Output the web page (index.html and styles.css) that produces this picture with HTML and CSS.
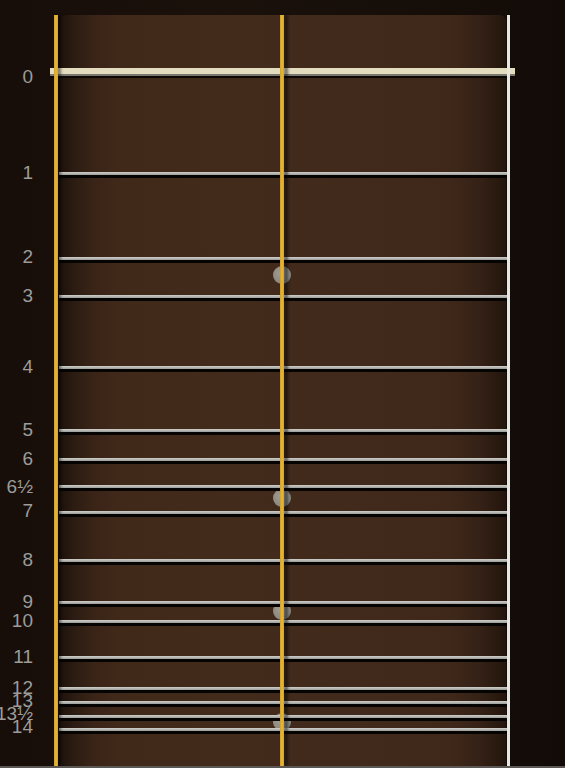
FILE: index.html
```html
<!DOCTYPE html>
<html lang="en">
<head>
  <meta charset="UTF-8">
  <meta name="viewport" content="width=device-width, initial-scale=1.0">
  <title>Fretboard</title>
  <link rel="stylesheet" href="styles.css">
</head>
<body>
  <div class="neck">
    <div class="board"></div>

    <!-- position markers sit under the frets -->
    <div class="dot" style="--y: 275px"></div>
    <div class="dot" style="--y: 498px"></div>
    <div class="dot" style="--y: 611px"></div>
    <div class="dot" style="--y: 722px"></div>

    <div class="nut"></div>
    <span class="label" style="--y: 77px">0</span>

    <div class="fret" style="--y: 173px"></div><span class="label" style="--y: 173px">1</span>
    <div class="fret" style="--y: 258px"></div><span class="label" style="--y: 257px">2</span>
    <div class="fret" style="--y: 296px"></div><span class="label" style="--y: 296px">3</span>
    <div class="fret" style="--y: 367px"></div><span class="label" style="--y: 367px">4</span>
    <div class="fret" style="--y: 430px"></div><span class="label" style="--y: 430px">5</span>
    <div class="fret" style="--y: 459px"></div><span class="label" style="--y: 459px">6</span>
    <div class="fret" style="--y: 486px"></div><span class="label" style="--y: 487px">6½</span>
    <div class="fret" style="--y: 512px"></div><span class="label" style="--y: 511px">7</span>
    <div class="fret" style="--y: 560px"></div><span class="label" style="--y: 560px">8</span>
    <div class="fret" style="--y: 602px"></div><span class="label" style="--y: 602px">9</span>
    <div class="fret" style="--y: 621px"></div><span class="label" style="--y: 621px">10</span>
    <div class="fret" style="--y: 657px"></div><span class="label" style="--y: 657px">11</span>
    <div class="fret" style="--y: 688px"></div><span class="label" style="--y: 688px">12</span>
    <div class="fret" style="--y: 702px"></div><span class="label" style="--y: 701px">13</span>
    <div class="fret" style="--y: 716px"></div><span class="label" style="--y: 714px">13½</span>
    <div class="fret" style="--y: 729px"></div><span class="label" style="--y: 727px">14</span>

    <div class="string gold left"></div>
    <div class="string gold middle"></div>
    <div class="string white"></div>

    <div class="edge"></div>
  </div>
</body>
</html>
```

FILE: styles.css
```css
* {
  box-sizing: border-box;
}
body {
  margin: 0;
  padding: 0;
  background-color: #150d08;
  font-family: "Liberation Sans", Arial, sans-serif;
  overflow: hidden;
}
.neck {
  position: relative;
  width: 565px;
  height: 768px;
  background: linear-gradient(to right, #170e09 0%, #1a110b 40%, #130b07 100%);
}
.board {
  position: absolute;
  left: 60px;
  top: 15px;
  width: 446px;
  bottom: 0;
  border-radius: 6px 6px 0 0;
  background: linear-gradient(to right,
    #1d120b 0px,
    #2c1c12 14px,
    #3a2417 34px,
    #41291a 60px,
    #432b1c 160px,
    #412a1b 300px,
    #3f2819 390px,
    #352116 420px,
    #2a1a10 436px,
    #22150d 446px);
}
.nut {
  position: absolute;
  left: 50px;
  top: 68px;
  width: 465px;
  height: 6px;
  background-color: #e4dcbf;
  box-shadow: 0 2px 0 #7a776e, 0 4px 0 #0c0805;
}
.fret {
  position: absolute;
  left: 59px;
  width: 449px;
  top: calc(var(--y) - 1px);
  height: 3px;
  background: linear-gradient(to bottom, #cfcfcc, #9c9c99);
  box-shadow: 0 3px 0 #060403;
}
.label {
  position: absolute;
  left: -20px;
  width: 53px;
  top: calc(var(--y) - 11px);
  line-height: 22px;
  font-size: 19px;
  color: #9d9c98;
  text-align: right;
  white-space: nowrap;
}
.dot {
  position: absolute;
  left: 273px;
  top: calc(var(--y) - 9px);
  width: 18px;
  height: 18px;
  border-radius: 50%;
  background: radial-gradient(circle at 40% 40%, #9d9b92, #7f7d75);
}
.string {
  position: absolute;
  top: 15px;
  bottom: 2px;
  width: 4px;
}
.gold {
  background: linear-gradient(to right, #cf9d24, #e8b83a 50%, #d2a02a);
}
.gold.left {
  left: 54px;
  box-shadow: 3px 0 3px rgba(0, 0, 0, 0.45);
}
.gold.middle {
  left: 280px;
  box-shadow: 4px 0 3px rgba(0, 0, 0, 0.5);
}
.white {
  left: 507px;
  width: 3px;
  background-color: #e6e6e4;
}
.edge {
  position: absolute;
  left: 0;
  right: 0;
  bottom: 0;
  height: 2px;
  background-color: #5a5754;
}
```
